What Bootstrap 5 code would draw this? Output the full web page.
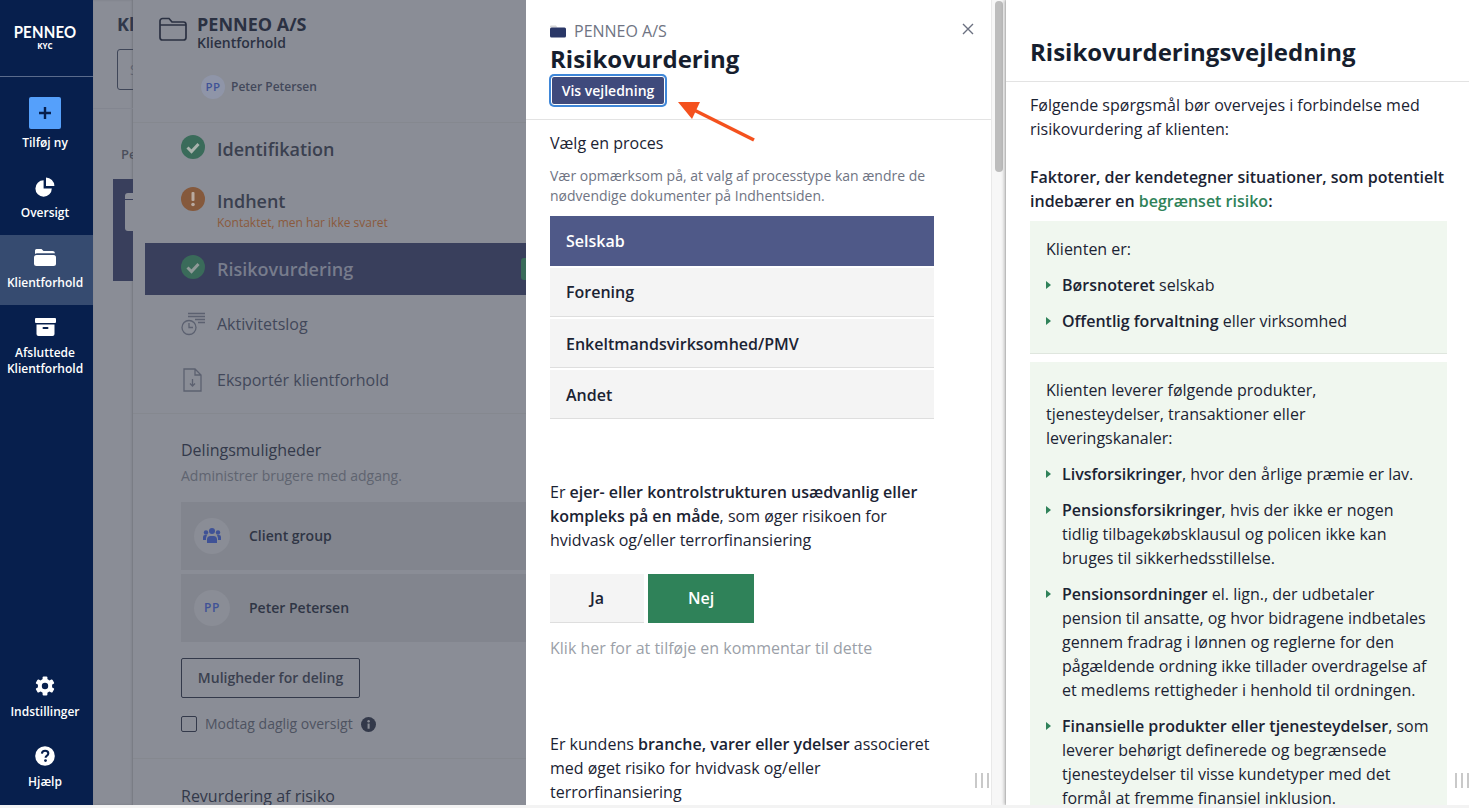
<!doctype html>
<html lang="da">
<head>
<meta charset="utf-8">
<title>Risikovurdering</title>
<link rel="stylesheet" href="https://cdn.jsdelivr.net/npm/bootstrap@5.3.0/dist/css/bootstrap.min.css">
<style>
html,body{height:100%;overflow:hidden}
body{font-family:"Open Sans","Liberation Sans",sans-serif;background:#f3f3f3;color:#1b2333;font-size:16px;line-height:24px}
.app{height:805px;overflow:hidden;position:relative}
.side{width:93px;flex:none;background:#071f4d;color:#fff}
.logo{height:77px;border-bottom:1px solid #5a6b8c;padding:22px 3px 0 0;line-height:1}
.logo-name{font-family:"Lato",sans-serif;font-size:15px;font-weight:700;letter-spacing:.2px;line-height:18px;transform:scaleY(1.12)}
.logo-kyc{font-size:8px;font-weight:700;line-height:9px;margin-top:1px}
.nav-top{padding-top:20px}
.side-item{height:70px;font-size:12px;font-weight:600;line-height:16px;color:#fff;text-decoration:none;padding:12px 3px 0 0;width:93px}
.side-item svg{display:block;flex:none;height:20px;margin-bottom:8px}
.side-item .add-box svg{height:14px;margin:0}
.side-add{height:68px;padding-top:0}
.add-box{width:32px;height:32px;background:#55a0fb;border-radius:2px;margin-bottom:6px}
.side-active{background:#364b70}
.side-foot{padding-bottom:1px}
.strip{width:40px;flex:none;background:#8a8d96;overflow:hidden;position:relative;box-shadow:inset -1px 0 2px rgba(0,0,0,.15)}
.strip-title{font-size:18px;font-weight:700;color:#30374a;padding:12px 0 0 24px;white-space:nowrap;height:49px}
.strip-search{margin-left:24px;width:40px;height:41px;border:1px solid #3f4658;border-radius:3px;padding:8px 0 0 12px;color:#5c6270;font-size:14px}
.strip-line{height:1px;background:#838690;margin-top:18px}
.strip-pe{font-size:13px;font-weight:600;color:#4a4f5c;padding:33px 0 0 28px;height:70px;white-space:nowrap}
.strip-block{background:#393f5c;height:102px;margin-left:20px;padding:14px 0 0 12px}
.strip-doc{width:30px;height:38px;background:linear-gradient(#8a8d96 6px,#393f5c 6px,#393f5c 7px,#8a8d96 7px);border-radius:3px}
.panel{width:393px;flex:none;background:#8a8d96;color:#33394a;overflow:hidden;box-shadow:-2px 0 3px rgba(0,0,0,.15)}
.p-head{height:123px;border-bottom:1px solid #85888f;padding:17px 0 0 25px}
.p-title{gap:9px}
.p-name{font-size:18px;font-weight:700;line-height:20px;margin-top:-3px;color:#2b3142}
.p-sub{font-size:14px;font-weight:600;line-height:18px;color:#2b3142;margin-top:0}
.p-avatar{width:24px;height:24px;border-radius:50%;background:#8f95a8;color:#3f5296;font-size:11.5px;font-weight:600;line-height:24px;text-align:center;letter-spacing:.5px}
.p-person{margin:23px 0 0 43px;font-size:12px;font-weight:600;gap:6px;color:#42485a}
.step{font-size:18px;font-weight:600;color:#3a404f;padding-left:48px;gap:12px;line-height:24px}
.step>svg{margin-top:-2px;flex:none}
.step-one{height:52px;padding-top:14px}
.step-two{height:68px;padding-top:14px}
.step-two small{display:block;font-size:12px;font-weight:400;line-height:16px;color:#8a5a3c;margin-top:2px}
.step-on{height:52px;margin-left:12px;padding:14px 0 0 36px;background:#393f5c;color:#777c8c;position:relative}
.step-flag{position:absolute;right:0;top:15px;width:5px;height:22px;background:#3a6b5a;border-radius:3px 0 0 3px}
.tool{font-size:16px;color:#42485a;padding-left:48px;gap:12px;height:56px;align-items:center;display:flex}
.tool-first{margin-top:1px}
.p-group{border-top:1px solid #85888f;padding:24px 0 0 48px;margin-top:5px;height:345px}
.g-title{font-size:16px;line-height:24px;color:#33394a}
.g-sub{font-size:14px;line-height:20px;color:#5f6470;margin-top:4px}
.g-row{height:68px;background:#82858e;margin-top:4px;padding-left:13px;gap:19px;font-size:14px;font-weight:600;color:#2f3545}
.g-row-first{margin-top:16px}
.g-circle{width:36px;height:36px;border-radius:50%;background:#8a8d96;color:#3f5296;font-size:12px;font-weight:600;letter-spacing:.6px}
.g-btn{height:40px;width:179px;border:1px solid #33394a;border-radius:2px;font-size:14px;font-weight:600;color:#3a404f;background:transparent;margin-top:16px;padding:0 0 2px}
.g-btn:hover{color:#3a404f;border-color:#33394a}
.g-check{font-size:14px;color:#4e5361;gap:8px;margin-top:14px;height:24px}
.g-box{width:16px;height:16px;border:1px solid #33394a;border-radius:2px}
.g-next{border-top:1px solid #85888f;padding:25px 0 0 48px;font-size:16px;color:#33394a}
.drawer{width:480px;flex:none;background:#fff;position:relative;overflow:hidden;border-right:1px solid #e4e4e4}
.d-head{height:120px;border-bottom:1px solid #e3e3e3;padding:19px 0 0 24px;margin-right:14px;position:relative}
.d-crumb{font-size:16px;line-height:24px;color:#6f7483;gap:8px}
.d-title{font-size:24px;font-weight:700;line-height:32px;color:#161e2e;margin:0}
.guide-btn{background:#3f4a7c;border:1px solid #fff;box-shadow:0 0 0 2px #3f87d8;border-radius:3px;color:#fff;font-size:14px;font-weight:600;line-height:20px;padding:0;margin:1px 0 0 1px;width:114px;height:29px;white-space:nowrap}
.guide-btn:hover{background:#3f4a7c;color:#fff}
.d-close{position:absolute;right:17px;top:23px;line-height:0}
.d-body{padding:11px 0 0 24px;width:466px}
.d-lead{font-size:16px;line-height:24px;color:#1b2333}
.d-hint{font-size:14px;line-height:20px;color:#6f7483;margin-top:11px;width:384px}
.opts{width:384px;margin-top:10px;border-radius:0;--bs-list-group-border-width:0;gap:2px}
.opt{background:#f4f4f4;color:#1b2333;height:49px;font-weight:600;line-height:48px;padding:0 16px;border-bottom:1px solid #dedede;border-radius:0}
.opt:nth-child(n+3){padding-top:1px}
.opt-on{background:#4f5988;color:#fff;border-bottom:0;height:50px;line-height:50px}
.d-q{font-size:16px;line-height:24px;width:384px}
.d-q-one{margin-top:61px}
.d-q-two{margin-top:72px}
.yn{gap:4px;margin-top:22px}
.yn-btn{height:49px;border-radius:0;font-weight:600;font-size:16px;padding:0;border:0;border-bottom:1px solid #dedede}
.yn-ja{width:94px;background:#f4f4f4;color:#1b2333}
.yn-nej{width:106px;background:#2f8259;color:#fff;border-bottom-color:#2f8259}
.yn-ja:hover{background:#f4f4f4;color:#1b2333}.yn-nej:hover{background:#2f8259;color:#fff}
.d-note{color:#9b9fa8;font-size:16px;margin-top:13px}
.d-track{position:absolute;top:0;right:0;width:14px;height:100%;background:#f7f7f7;border-left:1px solid #e9e9e9}
.d-thumb{position:absolute;left:3px;top:1px;width:8px;height:171px;background:#bdbdbd;border-radius:4px}
.grip{position:absolute;bottom:17px;display:flex;gap:4px}
.grip i{display:block;width:2px;height:15px;background:#c9c9c9}
.grip-d{right:16px}
.grip-g{right:0}
.arrow{position:absolute;left:670px;top:95px;pointer-events:none}
.guide{flex:1 1 auto;background:#fff;position:relative;overflow:hidden;box-shadow:-2px 0 3px rgba(0,0,0,.22)}
.g-head{height:82px;border-bottom:1px solid #e3e3e3;padding:37px 0 0 24px}
.g-h1{font-size:24px;font-weight:700;line-height:32px;color:#161e2e;margin:-1px 0 0}
.g-body{padding:11px 22px 0 24px}
.g-body p{margin:0}
.g-body .g-factors{margin-top:24px;font-weight:600}
.g-risk{color:#2f8259;font-weight:600}
.box{background:#f0f7ef;padding:16px 16px 0}
.box ul{list-style:none;padding:0;margin:0}
.box li{padding-left:16px;position:relative;margin-top:12px}
.box li::before{content:"";position:absolute;left:0;top:8px;border-left:5px solid #2f8259;border-top:4.5px solid transparent;border-bottom:4.5px solid transparent}
.box-a{margin-top:8px;height:133px;border-bottom:1px solid #dfe6de}
.box-b{margin-top:8px}
b,strong{font-weight:600}
</style>
</head>
<body>
<div class="app d-flex">
  <nav class="side d-flex flex-column">
    <div class="logo text-center">
      <div class="logo-name">PENNEO</div>
      <div class="logo-kyc">KYC</div>
    </div>
    <div class="nav-top d-flex flex-column align-items-center">
      <a class="side-item side-add d-flex flex-column align-items-center" href="#">
        <span class="add-box d-flex align-items-center justify-content-center">
          <svg width="14" height="14" viewBox="0 0 14 14"><path d="M7 1v12M1 7h12" stroke="#071f4d" stroke-width="2.4"/></svg>
        </span>
        Tilføj ny
      </a>
      <a class="side-item d-flex flex-column align-items-center" href="#">
        <svg width="20" height="20" viewBox="0 0 20 20"><path d="M8.6 3.3v8.2h8.2A8.2 8.2 0 1 1 8.6 3.3z" fill="#fff"/><path d="M11 .6a8.5 8.5 0 0 1 8.4 8.4H11z" fill="#fff"/></svg>
        Oversigt
      </a>
      <a class="side-item side-active d-flex flex-column align-items-center" href="#">
        <svg width="22" height="20" viewBox="0 0 22 20"><path d="M1 5V3.5A1.5 1.5 0 0 1 2.5 2h5l2 2h9A2.5 2.5 0 0 1 21 6.2H3.5A3 3 0 0 0 1 7z" fill="#fff"/><rect x="0" y="8" width="22" height="11" rx="2.5" fill="#fff"/></svg>
        Klientforhold
      </a>
      <a class="side-item d-flex flex-column align-items-center text-center" href="#">
        <svg width="21" height="20" viewBox="0 0 21 20"><rect x="0" y="1" width="21" height="5" rx="1" fill="#fff"/><path d="M1.5 7.5h18V17a2 2 0 0 1-2 2h-14a2 2 0 0 1-2-2z" fill="#fff"/><rect x="7.5" y="10" width="6" height="2" rx="1" fill="#071f4d"/></svg>
        Afsluttede<br>Klientforhold
      </a>
    </div>
    <div class="side-foot mt-auto d-flex flex-column align-items-center">
      <a class="side-item d-flex flex-column align-items-center" href="#">
        <svg width="20" height="20" viewBox="0 0 20 20"><g fill="#fff"><circle cx="10" cy="10" r="7.2"/><rect x="7.6" y=".4" width="4.8" height="4" rx="1"/><rect x="7.6" y="15.6" width="4.8" height="4" rx="1"/><rect x="7.6" y=".4" width="4.8" height="4" rx="1" transform="rotate(60 10 10)"/><rect x="7.6" y="15.6" width="4.8" height="4" rx="1" transform="rotate(60 10 10)"/><rect x="7.6" y=".4" width="4.8" height="4" rx="1" transform="rotate(-60 10 10)"/><rect x="7.6" y="15.6" width="4.8" height="4" rx="1" transform="rotate(-60 10 10)"/></g><circle cx="10" cy="10" r="3.2" fill="#071f4d"/></svg>
        Indstillinger
      </a>
      <a class="side-item d-flex flex-column align-items-center" href="#">
        <svg width="20" height="20" viewBox="0 0 20 20"><circle cx="10" cy="10" r="9.8" fill="#fff"/><path d="M6.9 7.6C7 5.8 8.3 4.7 10.1 4.7c1.9 0 3.2 1.1 3.2 2.7 0 1.3-.7 1.9-1.6 2.5-.9.6-1.1.9-1.1 1.8" fill="none" stroke="#071f4d" stroke-width="2.1"/><circle cx="10.5" cy="14.6" r="1.4" fill="#071f4d"/></svg>
        Hjælp
      </a>
    </div>
  </nav>

  <div class="strip">
    <div class="strip-title">Kl</div>
    <div class="strip-search">S</div>
    <div class="strip-line"></div>
    <div class="strip-pe">Pe</div>
    <div class="strip-block"><div class="strip-doc"></div></div>
  </div>

  <section class="panel">
    <div class="p-head">
      <div class="d-flex p-title">
        <svg width="30" height="26" viewBox="0 0 30 26"><path d="M2 20.5V4A2.5 2.5 0 0 1 4.500 1.500H11l3 3.500h11.500A2.500 2.500 0 0 1 28 7.500v13a2.500 2.500 0 0 1-2.500 2.500h-21A2.500 2.500 0 0 1 2 20.500zM2 8h26" fill="none" stroke="#2b3142" stroke-width="1.7"/></svg>
        <div>
          <div class="p-name">PENNEO A/S</div>
          <div class="p-sub">Klientforhold</div>
        </div>
      </div>
      <div class="p-person d-flex align-items-center">
        <span class="p-avatar">PP</span>Peter Petersen
      </div>
    </div>
    <div class="step step-one d-flex">
      <svg width="24" height="24" viewBox="0 0 24 24"><circle cx="12" cy="12" r="12" fill="#3a6b5a"/><path d="M6.500 12.500l4 4 7-7.500" fill="none" stroke="#a9b3ad" stroke-width="3"/></svg>
      Identifikation
    </div>
    <div class="step step-two d-flex">
      <svg width="24" height="24" viewBox="0 0 24 24"><circle cx="12" cy="12" r="12" fill="#85593c"/><rect x="10.500" y="5" width="3" height="9" rx="1" fill="#b9aaa0"/><circle cx="12" cy="17.500" r="1.800" fill="#b9aaa0"/></svg>
      <div>Indhent<small>Kontaktet, men har ikke svaret</small></div>
    </div>
    <div class="step step-on d-flex">
      <svg width="24" height="24" viewBox="0 0 24 24"><circle cx="12" cy="12" r="12" fill="#3a6b5a"/><path d="M6.500 12.500l4 4 7-7.500" fill="none" stroke="#8f9a98" stroke-width="3"/></svg>
      Risikovurdering
      <span class="step-flag"></span>
    </div>
    <div class="tool tool-first">
      <svg width="24" height="24" viewBox="0 0 24 24"><g fill="none" stroke="#5c6170" stroke-width="1.300"><path d="M7 1.500h17M7 4.500h17M14 7.500h10M17 10.500h7"/><circle cx="8" cy="15.500" r="7"/><path d="M8 11v4.500h4"/></g></svg>
      Aktivitetslog
    </div>
    <div class="tool">
      <svg width="24" height="26" viewBox="0 0 24 26"><g fill="none" stroke="#5c6170" stroke-width="1.300"><path d="M3 2h11l6 6v16H3zM14 2v6h6M11.500 12v7M9 16.500l2.500 2.500 2.500-2.500"/></g></svg>
      Eksportér klientforhold
    </div>
    <div class="p-group">
      <div class="g-title">Delingsmuligheder</div>
      <div class="g-sub">Administrer brugere med adgang.</div>
      <div class="g-row g-row-first d-flex align-items-center">
        <span class="g-circle d-flex align-items-center justify-content-center">
          <svg width="18" height="16" viewBox="0 0 18 16" fill="#3f5296"><circle cx="9" cy="3" r="3"/><circle cx="3" cy="4.500" r="2.200"/><circle cx="15" cy="4.500" r="2.200"/><path d="M4 15v-3.500A3.500 3.500 0 0 1 7.500 8h3a3.500 3.500 0 0 1 3.500 3.500V15zM0 12v-3a2 2 0 0 1 2-2h2l-1 3v2zM18 12v-3a2 2 0 0 0-2-2h-2l1 3v2z"/></svg>
        </span>
        Client group
      </div>
      <div class="g-row d-flex align-items-center">
        <span class="g-circle d-flex align-items-center justify-content-center">PP</span>
        Peter Petersen
      </div>
      <button type="button" class="btn g-btn d-block">Muligheder for deling</button>
      <div class="g-check d-flex align-items-center">
        <span class="g-box"></span>
        <span>Modtag daglig oversigt</span>
        <svg width="15" height="15" viewBox="0 0 16 16"><circle cx="8" cy="8" r="8" fill="#33394a"/><rect x="7" y="7" width="2.200" height="5.500" fill="#8a8d96"/><circle cx="8.100" cy="4.600" r="1.300" fill="#8a8d96"/></svg>
      </div>
    </div>
    <div class="g-next">Revurdering af risiko</div>
  </section>

  <section class="drawer">
    <div class="d-head">
      <div class="d-crumb d-flex align-items-center">
        <svg width="16" height="13" viewBox="0 0 16 13"><path d="M0 3V1.500A1 1 0 0 1 1 .5h5l1.500 2H0z" fill="#d8d8d8"/><rect y="2.500" width="16" height="10" rx="1.500" fill="#2a3767"/></svg>
        <span>PENNEO A/S</span>
      </div>
      <h1 class="d-title">Risikovurdering</h1>
      <button type="button" class="btn guide-btn">Vis vejledning</button>
      <span class="d-close">
        <svg width="12" height="12" viewBox="0 0 12 12"><path d="M1 1l10 10M11 1L1 11" stroke="#6b7080" stroke-width="1.400"/></svg>
      </span>
    </div>
    <div class="d-body">
      <div class="d-lead">Vælg en proces</div>
      <div class="d-hint">Vær opmærksom på, at valg af processtype kan ændre de nødvendige dokumenter på Indhentsiden.</div>
      <div class="list-group opts">
        <div class="list-group-item opt opt-on">Selskab</div>
        <div class="list-group-item opt">Forening</div>
        <div class="list-group-item opt">Enkeltmandsvirksomhed/PMV</div>
        <div class="list-group-item opt">Andet</div>
      </div>
      <div class="d-q d-q-one">Er <b>ejer- eller kontrolstrukturen usædvanlig eller kompleks på en måde</b>, som øger risikoen for hvidvask og/eller terrorfinansiering</div>
      <div class="yn d-flex">
        <button type="button" class="btn yn-btn yn-ja">Ja</button>
        <button type="button" class="btn yn-btn yn-nej">Nej</button>
      </div>
      <div class="d-note">Klik her for at tilføje en kommentar til dette</div>
      <div class="d-q d-q-two">Er kundens <b>branche, varer eller ydelser</b> associeret med øget risiko for hvidvask og/eller terrorfinansiering</div>
    </div>
    <div class="d-track"><div class="d-thumb"></div></div>
    <div class="grip grip-d"><i></i><i></i><i></i></div>
  </section>

  <section class="guide">
    <div class="g-head"><h2 class="g-h1">Risikovurderingsvejledning</h2></div>
    <div class="g-body">
      <p>Følgende spørgsmål bør overvejes i forbindelse med risikovurdering af klienten:</p>
      <p class="g-factors">Faktorer, der kendetegner situationer, som potentielt indebærer en <span class="g-risk">begrænset risiko</span>:</p>
      <div class="box box-a">
        <p>Klienten er:</p>
        <ul>
          <li><b>Børsnoteret</b> selskab</li>
          <li><b>Offentlig forvaltning</b> eller virksomhed</li>
        </ul>
      </div>
      <div class="box box-b">
        <p>Klienten leverer følgende produkter, tjenesteydelser, transaktioner eller leveringskanaler:</p>
        <ul>
          <li><b>Livsforsikringer</b>, hvor den årlige præmie er lav.</li>
          <li><b>Pensionsforsikringer</b>, hvis der ikke er nogen tidlig tilbagekøbsklausul og policen ikke kan bruges til sikkerhedsstillelse.</li>
          <li><b>Pensionsordninger</b> el. lign., der udbetaler pension til ansatte, og hvor bidragene indbetales gennem fradrag i lønnen og reglerne for den pågældende ordning ikke tillader overdragelse af et medlems rettigheder i henhold til ordningen.</li>
          <li><b>Finansielle produkter eller tjenesteydelser</b>, som leverer behørigt definerede og begrænsede tjenesteydelser til visse kundetyper med det formål at fremme finansiel inklusion.</li>
        </ul>
      </div>
    </div>
    <div class="grip grip-g"><i></i><i></i><i></i></div>
  </section>

  <svg class="arrow" width="90" height="50" viewBox="0 0 90 50"><path d="M84 45L24 15" stroke="#f4511e" stroke-width="3.500"/><path d="M8 7L30 7 22 24z" fill="#f4511e"/></svg>
</div>
<script src="https://cdn.jsdelivr.net/npm/bootstrap@5.3.0/dist/js/bootstrap.bundle.min.js"></script>
</body>
</html>
